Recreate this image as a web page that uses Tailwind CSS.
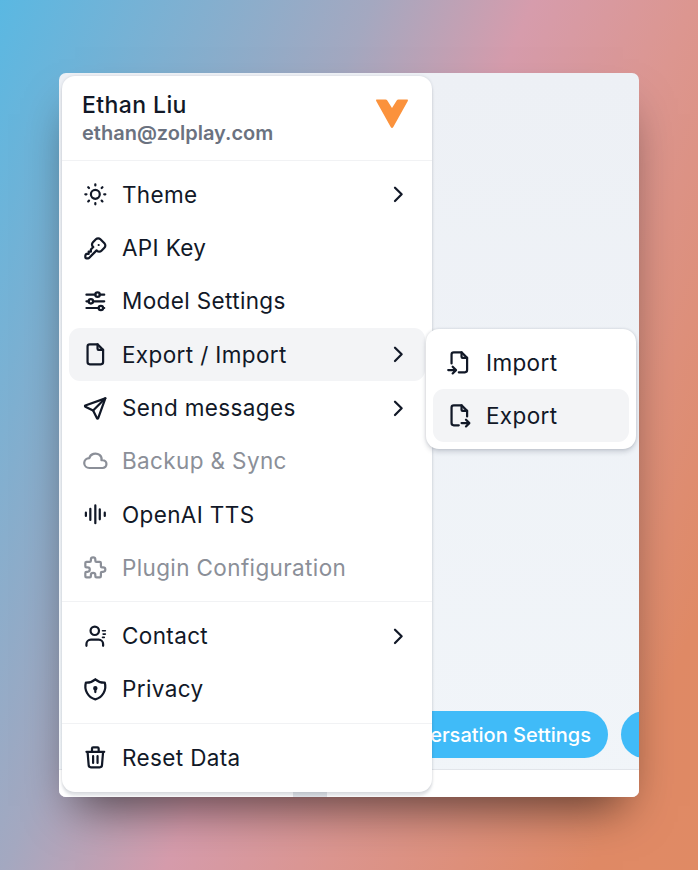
<!DOCTYPE html>
<html lang="en">
<head>
    <meta charset="UTF-8">
    <meta name="viewport" content="width=device-width, initial-scale=1.0">
    <title>Menu</title>
    <script src="https://cdn.jsdelivr.net/npm/@tailwindcss/browser@4"></script>
</head>
<body class="font-['Inter',sans-serif] text-[#111827]">
    <div class="relative w-[698px] h-[870px] overflow-hidden bg-[linear-gradient(113deg,#5ab8e2_0%,#a4a8c0_35%,#d69cac_50%,#dc9690_65%,#e08a66_90%,#e08a64_100%)]">
        <!-- App window -->
        <div class="absolute left-[59px] top-[73px] w-[580px] h-[724px] rounded-[7px] overflow-hidden flex flex-col bg-[linear-gradient(180deg,#edf0f5_0%,#f1f5f9_100%)] shadow-[0_25px_45px_-16px_rgba(0,0,0,0.6)]">
            <div class="flex-1"></div>
            <div class="h-[58px] flex justify-end items-start gap-[13px] overflow-hidden">
                <div class="h-[47px] px-[17px] shrink-0 rounded-full bg-[#40bbf8] text-white text-[20px] font-medium flex items-center">Conversation Settings</div>
                <div class="w-[48px] h-[47px] mr-[-30px] shrink-0 rounded-full bg-[#40bbf8]"></div>
            </div>
            <div class="relative h-[28px] bg-white border-t border-[#e2e5ea]">
                <div class="absolute left-[234px] bottom-0 w-[34px] h-[5px] bg-[#e2e5e9]"></div>
            </div>
        </div>

        <!-- Main menu -->
        <div class="absolute left-[62px] top-[76px] w-[370px] h-[716px] rounded-[13px] bg-white shadow-[0_4px_3px_rgba(60,70,90,0.14),0_0_3px_rgba(60,70,90,0.16)] flex flex-col">
            <div class="h-[85px] pl-[20px] pr-[23px] flex items-center justify-between border-b border-[#f1f2f4]">
                <div class="flex flex-col pt-[2px]">
                    <span class="text-[23px] leading-[28px] font-medium tracking-[0.4px]">Ethan Liu</span>
                    <span class="text-[20px] leading-[27px] mt-[1px] font-semibold text-[#6b7280]">ethan@zolplay.com</span>
                </div>
                <svg class="w-[34px] h-[31px] mb-[9px]" viewBox="0 0 34 31"><path d="M2 1.500h8.500q1.200 0 1.800 1L17 10l4.700-7.500q.6-1 1.800-1H32q1.600 0 .8 1.400L18.300 29q-1.300 2-2.600 0L1.200 2.900Q.4 1.500 2 1.500Z" fill="#fb923c"/></svg>
            </div>
            <div class="px-[7px] py-[7px] flex flex-col border-b border-[#f1f2f4]">
                <div class="h-[53.3px] pl-[12.67px] pr-[13.67px] rounded-[11px] flex items-center gap-[13.67px] text-[22.500px] tracking-[0.37px]">
                    <svg class="w-[26.67px] h-[26.67px] shrink-0" viewBox="0 0 24 24" fill="none" stroke="currentColor" stroke-width="2" stroke-linecap="round" stroke-linejoin="round"><circle cx="12" cy="12" r="4"/><path d="M3 12h1m8-9v1m8 8h1m-9 8v1M5.600 5.600l.7.7m12.100-.7-.7.7m0 11.400.7.7M6.300 17.700l-.7.7"/></svg>
                    <span class="flex-1">Theme</span>
                    <svg class="w-[26.67px] h-[26.67px]" viewBox="0 0 24 24" fill="none" stroke="currentColor" stroke-width="2" stroke-linecap="round" stroke-linejoin="round"><path d="m9 6 6 6-6 6"/></svg>
                </div>
                <div class="h-[53.3px] pl-[12.67px] pr-[13.67px] rounded-[11px] flex items-center gap-[13.67px] text-[22.500px] tracking-[0.37px]">
                    <svg class="w-[26.67px] h-[26.67px] shrink-0" viewBox="0 0 24 24" fill="none" stroke="currentColor" stroke-width="2" stroke-linecap="round" stroke-linejoin="round"><path d="M16.555 3.843l3.602 3.602a2.877 2.877 0 0 1 0 4.069l-2.643 2.643a2.877 2.877 0 0 1-4.069 0l-.301-.301-6.558 6.558a2 2 0 0 1-1.239.578l-.175.008H4.000a1 1 0 0 1-.993-.883L3 20.000v-1.172a2 2 0 0 1 .467-1.284l.119-.13.414-.414h2v-2h2v-2l2.144-2.144-.301-.301a2.877 2.877 0 0 1 0-4.069l2.643-2.643a2.877 2.877 0 0 1 4.069 0z"/><path d="M15 9h.01"/></svg>
                    <span class="flex-1">API Key</span>
                </div>
                <div class="h-[53.3px] pl-[12.67px] pr-[13.67px] rounded-[11px] flex items-center gap-[13.67px] text-[22.500px] tracking-[0.37px]">
                    <svg class="w-[26.67px] h-[26.67px] shrink-0" viewBox="0 0 24 24" fill="none" stroke="currentColor" stroke-width="2" stroke-linecap="round" stroke-linejoin="round"><circle cx="14" cy="6" r="2"/><path d="M4 6h8M16 6h4"/><circle cx="8" cy="12" r="2"/><path d="M4 12h2M10 12h10"/><circle cx="17" cy="18" r="2"/><path d="M4 18h11M19 18h1"/></svg>
                    <span class="flex-1">Model Settings</span>
                </div>
                <div class="h-[53.3px] pl-[12.67px] pr-[13.67px] rounded-[11px] flex items-center gap-[13.67px] text-[22.500px] tracking-[0.37px] bg-[#f3f4f6]">
                    <svg class="w-[26.67px] h-[26.67px] shrink-0" viewBox="0 0 24 24" fill="none" stroke="currentColor" stroke-width="2" stroke-linecap="round" stroke-linejoin="round"><path d="M14 3v4a1 1 0 0 0 1 1h4"/><path d="M17 21H7a2 2 0 0 1-2-2V5a2 2 0 0 1 2-2h7l5 5v11a2 2 0 0 1-2 2z"/></svg>
                    <span class="flex-1">Export / Import</span>
                    <svg class="w-[26.67px] h-[26.67px]" viewBox="0 0 24 24" fill="none" stroke="currentColor" stroke-width="2" stroke-linecap="round" stroke-linejoin="round"><path d="m9 6 6 6-6 6"/></svg>
                </div>
                <div class="h-[53.3px] pl-[12.67px] pr-[13.67px] rounded-[11px] flex items-center gap-[13.67px] text-[22.500px] tracking-[0.37px]">
                    <svg class="w-[26.67px] h-[26.67px] shrink-0" viewBox="0 0 24 24" fill="none" stroke="currentColor" stroke-width="2" stroke-linecap="round" stroke-linejoin="round"><path d="M10 14 21 3"/><path d="m21 3-6.500 18a.55.55 0 0 1-1 0L10 14l-7-3.500a.55.55 0 0 1 0-1L21 3"/></svg>
                    <span class="flex-1">Send messages</span>
                    <svg class="w-[26.67px] h-[26.67px]" viewBox="0 0 24 24" fill="none" stroke="currentColor" stroke-width="2" stroke-linecap="round" stroke-linejoin="round"><path d="m9 6 6 6-6 6"/></svg>
                </div>
                <div class="h-[53.3px] pl-[12.67px] pr-[13.67px] rounded-[11px] flex items-center gap-[13.67px] text-[22.500px] tracking-[0.37px] text-[#8b8f98]">
                    <svg class="w-[26.67px] h-[26.67px] shrink-0" viewBox="0 0 24 24" fill="none" stroke="currentColor" stroke-width="2" stroke-linecap="round" stroke-linejoin="round"><path d="M6.657 18C4.085 18 2 15.993 2 13.517c0-2.475 2.085-4.482 4.657-4.482.393-1.762 1.794-3.200 3.675-3.773 1.880-.572 3.956-.193 5.444 1 1.488 1.190 2.162 3.007 1.770 4.769h.99c1.913 0 3.464 1.560 3.464 3.486 0 1.927-1.551 3.487-3.465 3.487H6.657"/></svg>
                    <span class="flex-1">Backup &amp; Sync</span>
                </div>
                <div class="h-[53.3px] pl-[12.67px] pr-[13.67px] rounded-[11px] flex items-center gap-[13.67px] text-[22.500px] tracking-[0.37px]">
                    <svg class="w-[26.67px] h-[26.67px] shrink-0" viewBox="0 0 24 24" fill="none" stroke="currentColor" stroke-width="2" stroke-linecap="round"><path d="M3.500 10.500v3M7.500 7v10M12 4v16M16 7.500v9M20.500 10.500v3"/></svg>
                    <span class="flex-1">OpenAI TTS</span>
                </div>
                <div class="h-[53.3px] pl-[12.67px] pr-[13.67px] rounded-[11px] flex items-center gap-[13.67px] text-[22.500px] tracking-[0.37px] text-[#8b8f98]">
                    <svg class="w-[26.67px] h-[26.67px] shrink-0" viewBox="0 0 24 24" fill="none" stroke="currentColor" stroke-width="2" stroke-linecap="round" stroke-linejoin="round"><path d="M4 7h3a1 1 0 0 0 1-1V5a2 2 0 0 1 4 0v1a1 1 0 0 0 1 1h3a1 1 0 0 1 1 1v3a1 1 0 0 0 1 1h1a2 2 0 0 1 0 4h-1a1 1 0 0 0-1 1v3a1 1 0 0 1-1 1h-3a1 1 0 0 1-1-1v-1a2 2 0 0 0-4 0v1a1 1 0 0 1-1 1H4a1 1 0 0 1-1-1v-3a1 1 0 0 1 1-1h1a2 2 0 0 0 0-4H4a1 1 0 0 1-1-1V8a1 1 0 0 1 1-1"/></svg>
                    <span class="flex-1">Plugin Configuration</span>
                </div>
            </div>
            <div class="px-[7px] py-[7px] flex flex-col border-b border-[#f1f2f4]">
                <div class="h-[53.3px] pl-[12.67px] pr-[13.67px] rounded-[11px] flex items-center gap-[13.67px] text-[22.500px] tracking-[0.37px]">
                    <svg class="w-[26.67px] h-[26.67px] shrink-0" viewBox="0 0 24 24" fill="none" stroke="currentColor" stroke-width="2" stroke-linecap="round" stroke-linejoin="round"><circle cx="11.500" cy="7" r="3.800"/><path d="M4 20.500V19a4 4 0 0 1 4-4h7a4 4 0 0 1 4 4v1.500"/><path d="M18.500 7h2.500M19 10h2M18.500 13h1.500" stroke-width="1.500"/></svg>
                    <span class="flex-1">Contact</span>
                    <svg class="w-[26.67px] h-[26.67px]" viewBox="0 0 24 24" fill="none" stroke="currentColor" stroke-width="2" stroke-linecap="round" stroke-linejoin="round"><path d="m9 6 6 6-6 6"/></svg>
                </div>
                <div class="h-[53.3px] pl-[12.67px] pr-[13.67px] rounded-[11px] flex items-center gap-[13.67px] text-[22.500px] tracking-[0.37px]">
                    <svg class="w-[26.67px] h-[26.67px] shrink-0" viewBox="0 0 24 24" fill="none" stroke="currentColor" stroke-width="2" stroke-linecap="round" stroke-linejoin="round"><path d="M12 3a12 12 0 0 0 8.500 3 12 12 0 0 1-8.500 15A12 12 0 0 1 3.500 6 12 12 0 0 0 12 3"/><circle cx="12" cy="11" r="1"/><path d="M12 12v2.500"/></svg>
                    <span class="flex-1">Privacy</span>
                </div>
            </div>
            <div class="px-[7px] pt-[7px] flex flex-col">
                <div class="h-[53.3px] pl-[12.67px] pr-[13.67px] rounded-[11px] flex items-center gap-[13.67px] text-[22.500px] tracking-[0.37px]">
                    <svg class="w-[26.67px] h-[26.67px] shrink-0" viewBox="0 0 24 24" fill="none" stroke="currentColor" stroke-width="2" stroke-linecap="round" stroke-linejoin="round"><path d="M4 7h16M10 11v6M14 11v6M5 7l1 12a2 2 0 0 0 2 2h8a2 2 0 0 0 2-2l1-12M9 7V4a1 1 0 0 1 1-1h4a1 1 0 0 1 1 1v3"/></svg>
                    <span class="flex-1">Reset Data</span>
                </div>
            </div>
        </div>

        <!-- Export / Import submenu -->
        <div class="absolute left-[426px] top-[329px] w-[210px] h-[120px] p-[7px] rounded-[13px] bg-white shadow-[0_3px_5px_rgba(60,70,90,0.2),0_0_3px_rgba(60,70,90,0.18)] flex flex-col">
            <div class="h-[53.3px] pl-[12.67px] rounded-[11px] flex items-center gap-[13.67px] text-[22.500px] tracking-[0.37px]">
                <svg class="w-[26.67px] h-[26.67px] shrink-0" viewBox="0 0 24 24" fill="none" stroke="currentColor" stroke-width="2" stroke-linecap="round" stroke-linejoin="round"><path d="M14 3v4a1 1 0 0 0 1 1h4"/><path d="M5 13V5a2 2 0 0 1 2-2h7l5 5v11a2 2 0 0 1-2 2h-5.500M2 19h7m-3-3 3 3-3 3"/></svg>
                <span>Import</span>
            </div>
            <div class="h-[53.3px] pl-[12.67px] rounded-[11px] flex items-center gap-[13.67px] text-[22.500px] tracking-[0.37px] bg-[#f3f4f6]">
                <svg class="w-[26.67px] h-[26.67px] shrink-0" viewBox="0 0 24 24" fill="none" stroke="currentColor" stroke-width="2" stroke-linecap="round" stroke-linejoin="round"><path d="M14 3v4a1 1 0 0 0 1 1h4"/><path d="M11.500 21H7a2 2 0 0 1-2-2V5a2 2 0 0 1 2-2h7l5 5v5m-5 6h7m-3-3 3 3-3 3"/></svg>
                <span>Export</span>
            </div>
        </div>
    </div>
</body>
</html>
